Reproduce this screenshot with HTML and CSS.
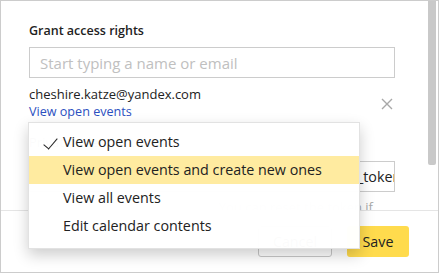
FILE: index.html
```html
<!DOCTYPE html>
<html lang="en">
<head>
    <meta charset="UTF-8">
    <title>Grant access rights</title>
    <link rel="stylesheet" href="styles.css">
</head>
<body>

<div class="dialog">
    <div class="content">
        <h3 class="title">Grant access rights</h3>
        <input class="field" type="text" placeholder="Start typing a name or email">

        <div class="member">
            <div class="member-info">
                <div class="email">cheshire.katze@yandex.com</div>
                <a class="access-link" href="#">View open events</a>
            </div>
            <span class="remove">
                <svg width="12" height="12" viewBox="0 0 12 12"><path d="M1 1L11 11M11 1L1 11" stroke="#a8a8a8" stroke-width="1.4"/></svg>
            </span>
        </div>

        <div class="token-label">Private calendar token</div>
        <div class="token-field">_token</div>
        <div class="hint">You can reset the token if</div>
    </div>

    <div class="footer">
        <button class="btn btn-cancel">Cancel</button>
        <button class="btn btn-save">Save</button>
    </div>

    <div class="scrollbar"></div>

    <ul class="menu">
        <li class="menu-item checked">View open events</li>
        <li class="menu-item active">View open events and create new ones</li>
        <li class="menu-item">View all events</li>
        <li class="menu-item">Edit calendar contents</li>
    </ul>
</div>

</body>
</html>
```

FILE: styles.css
```css
body {
    margin: 0;
    padding: 0;
    background: #fff;
    font-family: "Open Sans", Arial, sans-serif;
    color: #222;
}
.dialog {
    position: relative;
    width: 439px;
    height: 273px;
    box-sizing: border-box;
    border: 1px solid #ccc;
    background: #fff;
    overflow: hidden;
}
.content {
    height: 209px;
    overflow: hidden;
    padding: 21px 42px 0 28px;
    box-sizing: border-box;
}
.title {
    margin: 0 0 8px;
    font-size: 12.5px;
    line-height: 17px;
    font-weight: 600;
}
.field {
    display: block;
    width: 366px;
    height: 31px;
    box-sizing: border-box;
    border: 1px solid #ccc;
    padding: 0 10px;
    font-family: inherit;
    font-size: 15px;
    outline: none;
}
.field::placeholder {
    color: #c0c0c0;
}
.member {
    display: flex;
    align-items: center;
    justify-content: space-between;
    width: 366px;
    margin-top: 8px;
}
.email {
    font-size: 13px;
    line-height: 17px;
}
.access-link {
    display: block;
    font-size: 12.6px;
    line-height: 17px;
    color: #2b4fbf;
    text-decoration: none;
}
.remove {
    display: flex;
    margin-right: 2px;
    margin-top: 2px;
}
.token-label {
    margin-top: 14px;
    font-size: 13px;
    line-height: 17px;
}
.token-field {
    margin-top: 10px;
    width: 366px;
    height: 31px;
    box-sizing: border-box;
    border: 1px solid #ccc;
    padding: 0 0 0 327px;
    font-size: 14.3px;
    line-height: 29px;
    white-space: nowrap;
    overflow: hidden;
}
.hint {
    margin-top: 7px;
    width: 344px;
    text-align: right;
    font-size: 13px;
    line-height: 17px;
    color: #aaa;
    white-space: nowrap;
}
.footer {
    display: flex;
    justify-content: flex-end;
    gap: 15px;
    height: 62px;
    box-sizing: border-box;
    border-top: 1px solid #e5e5e5;
    padding: 15px 29px 0 0;
}
.btn {
    height: 31px;
    border-radius: 3px;
    font-family: inherit;
    font-size: 14.3px;
    color: #222;
    padding: 0 9px;
}
.btn-cancel {
    width: 74px;
    background: #fff;
    border: 1px solid #c8c8c8;
}
.btn-save {
    width: 62px;
    background: #ffdb4d;
    border: none;
}
.scrollbar {
    position: absolute;
    top: 0;
    right: 2px;
    width: 8px;
    height: 164px;
    background: #c9c9c9;
    border-radius: 0 0 2px 2px;
}
.menu {
    position: absolute;
    left: 27px;
    top: 121px;
    width: 330px;
    margin: 0;
    padding: 5px 0 8px;
    list-style: none;
    background: rgba(255, 255, 255, 0.985);
    border: 1px solid #e2e2e2;
    box-shadow: 0 6px 14px rgba(0, 0, 0, 0.2);
}
.menu-item {
    position: relative;
    height: 28px;
    line-height: 28px;
    padding-left: 34px;
    font-size: 14.3px;
    white-space: nowrap;
}
.menu-item.active {
    background: #ffeba0;
}
.menu-item.checked::before {
    content: "";
    position: absolute;
    left: 18px;
    top: 7px;
    width: 6px;
    height: 13px;
    border-right: 1.6px solid #222;
    border-bottom: 1.6px solid #222;
    transform: rotate(40deg);
}
```
